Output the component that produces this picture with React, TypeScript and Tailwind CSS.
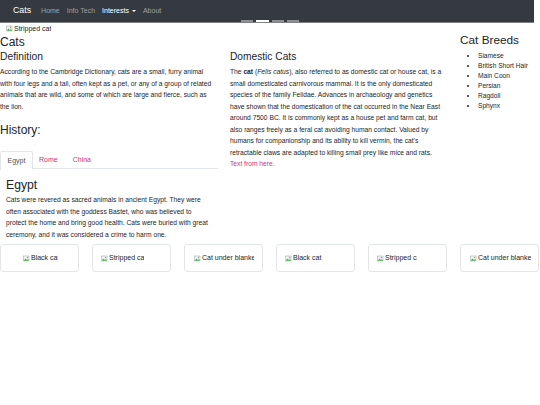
import React from 'react';

function BrokenImg() {
  return (
    <svg width="7" height="7" viewBox="0 0 14 14" className="inline-block shrink-0">
      <rect x="1" y="2" width="11" height="10" fill="#f4f4f4" stroke="#9aa0a6" strokeWidth="1" />
      <path d="M1.5 11.5 L5 7 L8 10 L10 8 L12 11.5 Z" fill="#4caf50" />
      <circle cx="9" cy="5" r="1.3" fill="#7cb342" />
    </svg>
  );
}

function AltImg({ alt, width }: { alt: string; width?: number }) {
  return (
    <span
      className="inline-flex items-center gap-[1px] overflow-hidden whitespace-nowrap"
      style={width ? { width } : undefined}
    >
      <BrokenImg />
      <span>{alt}</span>
    </span>
  );
}

const cards = [
  { alt: 'Black cat', pl: 22, w: 35 },
  { alt: 'Stripped cat', pl: 8, w: 43 },
  { alt: 'Cat under blanket', pl: 9, w: 60 },
  { alt: 'Black cat', pl: 8, w: 38 },
  { alt: 'Stripped cat', pl: 8, w: 40 },
  { alt: 'Cat under blanket', pl: 9, w: 61 },
];

const breeds = ['Siamese', 'British Short Hair', 'Main Coon', 'Persian', 'Ragdoll', 'Sphynx'];

export default function App() {
  return (
    <div className="relative w-[540px] h-[405px] overflow-hidden bg-white text-[#212529] font-['Liberation_Sans',Arial,sans-serif] text-[6.7px] leading-[11.5px]">
      {/* navbar */}
      <nav className="relative w-[534px] h-[23px] bg-[#343a40] border-b border-[#7d8084] flex items-center pl-[13px]">
        <span className="text-white text-[8.8px] mr-[10px]">Cats</span>
        <div className="flex items-center gap-[7px] text-[7px] text-white/50">
          <span>Home</span>
          <span>Info Tech</span>
          <span className="text-white flex items-center gap-[3px]">
            Interests
            <span className="inline-block w-0 h-0 border-l-[2px] border-r-[2px] border-t-[2.5px] border-l-transparent border-r-transparent border-t-white" />
          </span>
          <span>About</span>
        </div>
        <div className="absolute left-[241px] bottom-0 flex gap-[3px]">
          <span className="w-[12px] h-[2px] bg-[#8d9094]" />
          <span className="w-[13px] h-[2px] bg-white" />
          <span className="w-[12px] h-[2px] bg-[#8d9094]" />
          <span className="w-[12px] h-[2px] bg-[#8d9094]" />
        </div>
      </nav>

      <div className="flex">
        <main className="w-[445px]">
          <div className="h-[11px] pl-[6px] flex items-center text-[7px]">
            <AltImg alt="Stripped cat" />
          </div>
          <h1 className="mt-[1px] text-[12px] leading-[15px]">Cats</h1>
          <div className="flex">
            <div className="w-[218px]">
              <h4 className="text-[10.3px] leading-[13px]">Definition</h4>
              <p className="mt-[3px] w-[226px]">
                According to the Cambridge Dictionary, cats are a small, furry animal
                <br />
                with four legs and a tail, often kept as a pet, or any of a group of related
                <br />
                animals that are wild, and some of which are large and fierce, such as
                <br />
                the lion.
              </p>
              <h3 className="mt-[10px] text-[12px] leading-[16px]">History:</h3>
              <div className="mt-[13px] flex h-[18px] border-b border-[#e3e6e9]">
                <span className="w-[33px] h-[19px] -mb-px flex items-center justify-center border border-[#e3e6e9] border-b-white bg-white rounded-t-[2px] text-[#495057] text-[7px]">
                  Egypt
                </span>
                <span className="ml-[6px] flex items-center text-[7px] text-[#d0317c]">Rome</span>
                <span className="ml-[15px] flex items-center text-[7px] text-[#d0317c]">China</span>
              </div>
              <h3 className="mt-[8px] text-[12.2px] leading-[16px] pl-[6px]">Egypt</h3>
              <p className="mt-[1px] ml-[6px] w-[204px]">
                Cats were revered as sacred animals in ancient Egypt. They were often associated with the goddess Bastet, who was believed to protect the home and bring good health. Cats were buried with great ceremony, and it was considered a crime to harm one.
              </p>
            </div>
            <div className="ml-[12px] w-[216px]">
              <h4 className="text-[10.2px] leading-[13px]">Domestic Cats</h4>
              <p className="mt-[3px]">
                The <b>cat</b> (<i>Felis catus</i>), also referred to as domestic cat or house cat, is a small domesticated carnivorous mammal. It is the only domesticated species of the family Felidae. Advances in archaeology and genetics have shown that the domestication of the cat occurred in the Near East around 7500 BC. It is commonly kept as a house pet and farm cat, but also ranges freely as a feral cat avoiding human contact. Valued by humans for companionship and its ability to kill vermin, the cat's retractable claws are adapted to killing small prey like mice and rats.{' '}
                <span className="text-[#d0317c]">Text from here.</span>
              </p>
            </div>
          </div>
        </main>
        <aside className="ml-[15px] mt-[10px] w-[80px]">
          <h3 className="text-[11.8px] leading-[15px]">Cat Breeds</h3>
          <ul className="mt-[3px] pl-[18px] list-disc text-[6.6px] leading-[10px]">
            {breeds.map((b) => (
              <li key={b}>{b}</li>
            ))}
          </ul>
        </aside>
      </div>

      <div className="absolute left-0 top-[244px] flex gap-[13px] text-[7px]">
        {cards.map((c, i) => (
          <div
            key={i}
            className="w-[79px] h-[28px] border border-[#e3e6e9] rounded-[3px] flex items-center"
            style={{ paddingLeft: c.pl }}
          >
            <AltImg alt={c.alt} width={c.w} />
          </div>
        ))}
      </div>
    </div>
  );
}
